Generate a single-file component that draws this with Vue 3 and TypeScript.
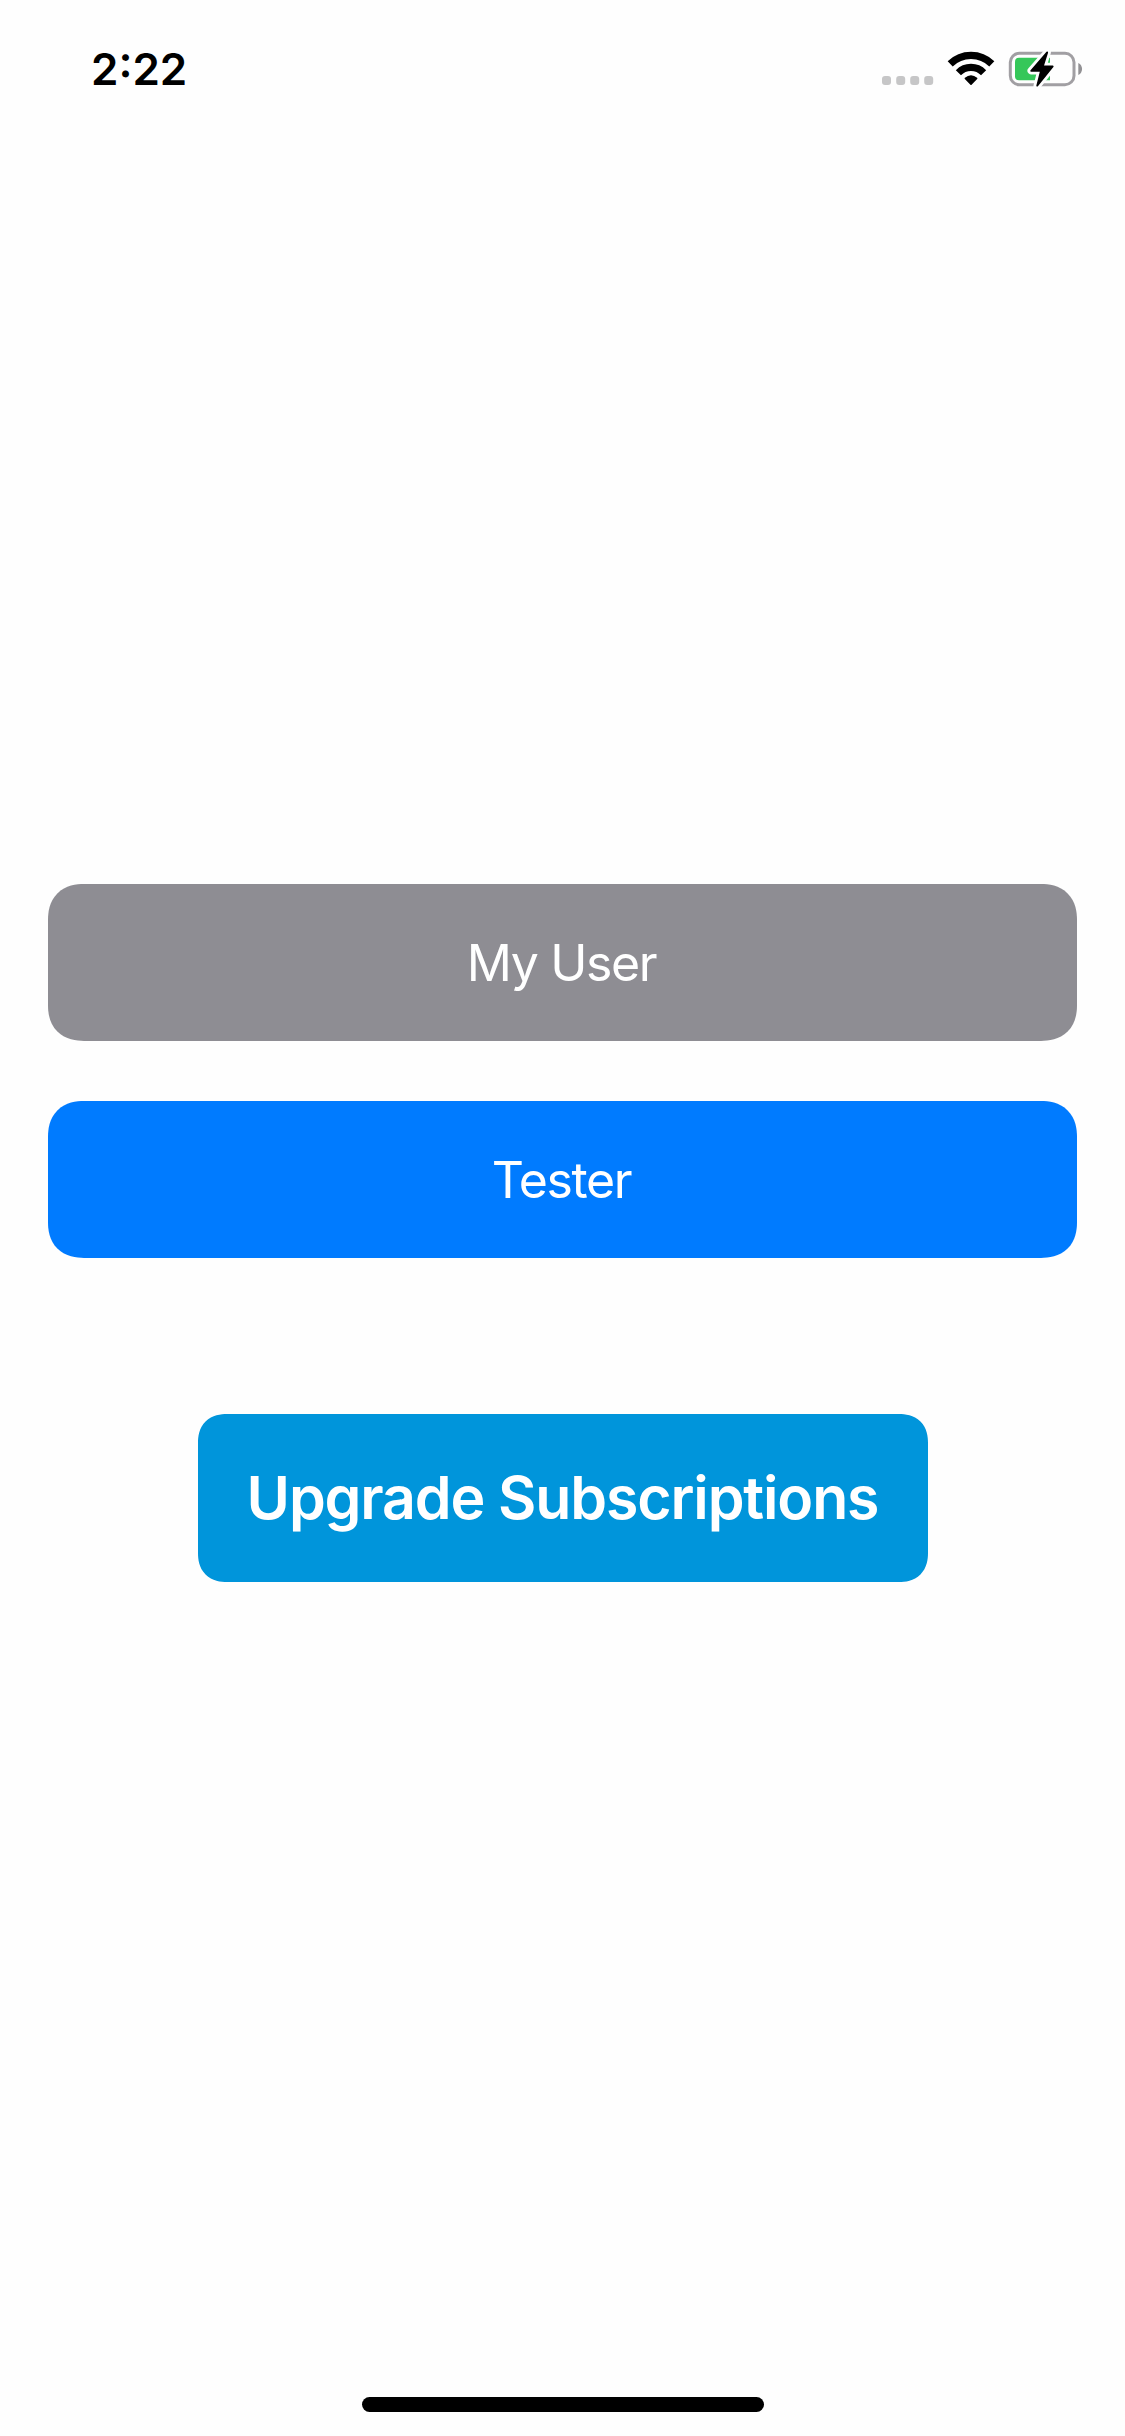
<script setup lang="ts">
interface UserButton {
  label: string
  tone: 'muted' | 'primary'
}

const users: UserButton[] = [
  { label: 'My User', tone: 'muted' },
  { label: 'Tester', tone: 'primary' },
]

const signalDots: number[] = [886.5, 900.7, 914.7, 928.7]
</script>

<template>
  <div class="screen">
    <header class="status-bar">
      <span class="time">2<span class="colon">:</span>22</span>
      <svg class="indicators" viewBox="876 46 212 46" aria-hidden="true">
        <rect v-for="x in signalDots" :key="x" :x="x - 4.5" y="76" width="9" height="9" rx="3" fill="#c6c6c7" />
        <g fill="none" stroke="#000" stroke-width="7.2">
          <path d="M950.2 63.9A29.6 29.6 0 0 1 991.8 63.9" />
          <path d="M958.4 72.7A17.6 17.6 0 0 1 983.6 72.7" />
        </g>
        <path
          d="M965.4 78.4Q971 73.8 976.6 78.4L971 84.2Z"
          fill="#000"
          stroke="#000"
          stroke-width="1.6"
          stroke-linejoin="round"
        />
        <rect x="1010.3" y="53.3" width="63.7" height="31.4" rx="9" fill="none" stroke="#a19fa3" stroke-width="3" />
        <path d="M1078.3 63C1083.3 65.2 1083.3 72.8 1078.3 75Z" fill="#929194" />
        <path d="M1019 57.7H1050V80.3H1019Q1015 80.3 1015 76.3V61.7Q1015 57.7 1019 57.7Z" fill="#35c759" />
        <g stroke-linejoin="round">
          <path d="M1047.2 52.4L1031.2 70.8H1041L1037.2 85.6L1052.7 66.4H1042.8Z" fill="#fefefe" stroke="#fefefe" stroke-width="7.4" />
          <path d="M1047.2 52.4L1031.2 70.8H1041L1037.2 85.6L1052.7 66.4H1042.8Z" fill="#000" stroke="#000" stroke-width="1.8" />
        </g>
      </svg>
    </header>

    <main class="content">
      <button
        v-for="user in users"
        :key="user.label"
        type="button"
        class="user-button"
        :class="user.tone"
      >
        <span>{{ user.label }}</span>
      </button>
      <button type="button" class="upgrade-button"><span>Upgrade Subscriptions</span></button>
    </main>

    <footer class="home-area"><div class="home-indicator"></div></footer>
  </div>
</template>

<style>
body {
  margin: 0;
  background: #fefefe;
}
</style>

<style scoped>
.screen {
  display: flex;
  flex-direction: column;
  width: 1125px;
  height: 2436px;
  overflow: hidden;
  background: #fefefe;
  font-family: Inter, "Liberation Sans", sans-serif;
}

.status-bar {
  display: flex;
  align-items: center;
  justify-content: space-between;
  box-sizing: border-box;
  height: 138px;
  padding: 0 37px 0 91px;
}

.time {
  font-size: 44px;
  font-weight: 600;
  line-height: 54px;
  color: #000;
}

.colon {
  position: relative;
  top: -3px;
}

.indicators {
  width: 212px;
  height: 46px;
}

.content {
  display: flex;
  flex: 1;
  flex-direction: column;
  align-items: center;
  padding: 746px 48px 0;
}

.user-button,
.upgrade-button {
  display: flex;
  align-items: center;
  justify-content: center;
  box-sizing: border-box;
  padding: 0;
  border: 0;
  font-family: inherit;
  white-space: nowrap;
  color: #fff;
}

.user-button {
  width: 1029px;
  height: 157px;
  margin-bottom: 60px;
  border-radius: 36px;
  corner-shape: superellipse(1.2);
  font-size: 50px;
  font-weight: 400;
  line-height: 60px;
  letter-spacing: -1.35px;
}

.user-button span {
  margin-right: 2px;
}

.muted {
  background: #8e8d93;
}

.primary {
  background: #007bff;
}

.upgrade-button {
  width: 730px;
  height: 168px;
  margin-top: 96px;
  border-radius: 29px;
  corner-shape: superellipse(1.2);
  background: #0095db;
  font-size: 59px;
  font-weight: 600;
  line-height: 72px;
  letter-spacing: -1.13px;
}

.home-area {
  display: flex;
  justify-content: center;
  height: 39px;
}

.home-indicator {
  width: 402px;
  height: 15px;
  border-radius: 8px;
  background: #000;
}
</style>
